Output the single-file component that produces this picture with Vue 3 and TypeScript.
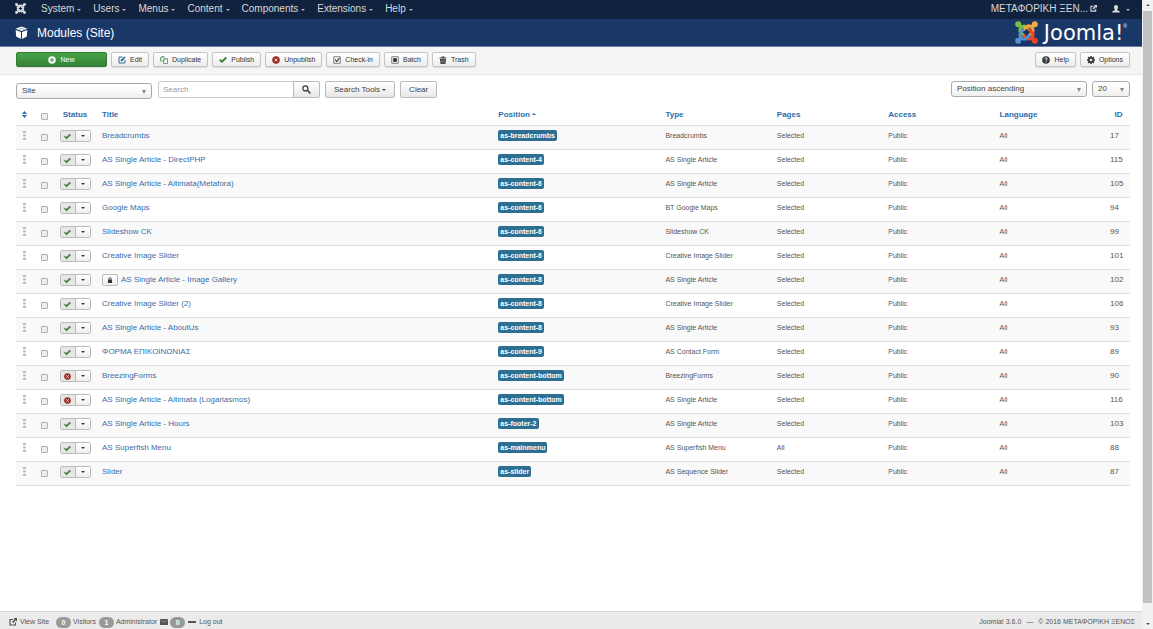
<script setup lang="ts">
import { ref } from 'vue'

interface ModuleRow {
  id: number
  title: string
  position: string
  type: string
  pages: string
  published: boolean
  locked?: boolean
}

const menus: string[] = ['System', 'Users', 'Menus', 'Content', 'Components', 'Extensions', 'Help']

const actions: { label: string; icon: string }[] = [
  { label: 'Edit', icon: 'edit' },
  { label: 'Duplicate', icon: 'copy' },
  { label: 'Publish', icon: 'check' },
  { label: 'Unpublish', icon: 'cross' },
  { label: 'Check-in', icon: 'tick' },
  { label: 'Batch', icon: 'batch' },
  { label: 'Trash', icon: 'trash' },
]

const plainHeads: string[] = ['Type', 'Pages', 'Access', 'Language']

const row = (id: number, title: string, position: string, type = 'AS Single Article', published = true): ModuleRow => ({
  id, title, position, type, pages: 'Selected', published,
})

const rows: ModuleRow[] = [
  row(17, 'Breadcrumbs', 'as-breadcrumbs', 'Breadcrumbs'),
  row(115, 'AS Single Article - DirectPHP', 'as-content-4'),
  row(105, 'AS Single Article - Aitimata(Metafora)', 'as-content-6'),
  row(94, 'Google Maps', 'as-content-6', 'BT Google Maps'),
  row(99, 'Slideshow CK', 'as-content-6', 'Slideshow CK'),
  row(101, 'Creative Image Slider', 'as-content-6', 'Creative Image Slider'),
  { ...row(102, 'AS Single Article - Image Gallery', 'as-content-8'), locked: true },
  row(106, 'Creative Image Slider (2)', 'as-content-8', 'Creative Image Slider'),
  row(93, 'AS Single Article - AboutUs', 'as-content-8'),
  row(89, 'ΦΟΡΜΑ ΕΠΙΚΟΙΝΩΝΙΑΣ', 'as-content-9', 'AS Contact Form'),
  row(90, 'BreezingForms', 'as-content-bottom', 'BreezingForms', false),
  row(116, 'AS Single Article - Aitimata (Logariasmos)', 'as-content-bottom', 'AS Single Article', false),
  row(103, 'AS Single Article - Hours', 'as-footer-2'),
  { ...row(88, 'AS Superfish Menu', 'as-mainmenu', 'AS Superfish Menu'), pages: 'All' },
  row(87, 'Slider', 'as-slider', 'AS Sequence Slider'),
]

const search = ref('')
</script>

<template>
  <div class="window">
    <svg class="defs" aria-hidden="true">
      <symbol id="arm" viewBox="0 0 32 32">
        <circle cx="4.500" cy="4.500" r="4.200" fill="currentColor" />
        <path d="M4.500 4.500 9 9" stroke="currentColor" stroke-width="5" />
        <path d="M13 21 8.500 16.500C6 14 6.200 11.500 8.500 8.800 11.500 6.200 14 6 16.500 8.500L20.500 12.500" fill="none" stroke="currentColor" stroke-width="4" />
      </symbol>
      <symbol id="i-edit" viewBox="0 0 16 16">
        <path d="M9 2H2v12h12V8" fill="none" stroke="#2d6f93" stroke-width="2" />
        <path d="M5 11l1-4 7-6 2 2-6 7z" fill="#2d6f93" />
      </symbol>
      <symbol id="i-copy" viewBox="0 0 16 16">
        <path d="M6 10H1V4l3-3h4v4M1 4h3V1M7 15V8l3-3h5v10zM7 8h3V5" fill="none" stroke="#4b8b57" stroke-width="1.5" />
      </symbol>
      <symbol id="i-check" viewBox="0 0 16 16">
        <path d="M1.5 7.5 6 11.500 14.5 3" fill="none" stroke="#378137" stroke-width="3.8" />
      </symbol>
      <symbol id="i-cross" viewBox="0 0 16 16">
        <circle cx="8" cy="8" r="7.5" fill="#9d261d" />
        <path d="M5 5l6 6M11 5l-6 6" stroke="#f3e2e0" stroke-width="2" />
      </symbol>
      <symbol id="i-tick" viewBox="0 0 16 16">
        <path d="M1.5 1.5h13v13h-13z" fill="none" stroke="#555" stroke-width="1.5" />
        <path d="M4 7l3.5 4L13 4" fill="none" stroke="#222" stroke-width="2.2" />
      </symbol>
      <symbol id="i-batch" viewBox="0 0 16 16">
        <path d="M1.5 1.5h13v13h-13z" fill="none" stroke="#555" stroke-width="1.5" />
        <path d="M4.5 4.5h7v7h-7z" fill="#222" />
      </symbol>
      <symbol id="i-trash" viewBox="0 0 16 16">
        <path d="M1 3h4V1h6v2h4v2H1zM2 6h12l-1 10H3z" fill="#444" />
        <path d="M6 8v6M10 8v6" stroke="#aaa" stroke-width="1.2" />
      </symbol>
      <symbol id="i-external" viewBox="0 0 16 16">
        <path d="M8 3H2v11h11V9" fill="none" stroke="currentColor" stroke-width="2.400" />
        <path d="M9 0h7v7l-2.500-2.500L8.500 10 6 7.500 11.500 2.500z" fill="currentColor" />
      </symbol>
    </svg>

    <div class="page">
      <nav class="topbar">
        <a href="#" class="brand" aria-label="Control panel">
          <svg viewBox="0 0 32 32">
            <use href="#arm" />
            <use href="#arm" transform="rotate(90 16 16)" />
            <use href="#arm" transform="rotate(180 16 16)" />
            <use href="#arm" transform="rotate(270 16 16)" />
          </svg>
        </a>
        <button v-for="m in menus" :key="m" type="button" class="menu">{{ m }}<i class="caret" /></button>
        <a href="#" class="site">ΜΕΤΑΦΟΡΙΚΗ ΞΕΝ...<svg><use href="#i-external" /></svg></a>
        <button type="button" class="menu user" aria-label="User menu">
          <svg viewBox="0 0 16 16"><path d="M8 0c3 0 4 2 4 4.500S10.500 9 10 9.500c0 1.500 6 2 6 5.500H0c0-3.500 6-4 6-5.500C5.500 9 4 7 4 4.500S5 0 8 0z" fill="#d9d9d9" /></svg>
          <i class="caret" />
        </button>
      </nav>

      <header class="titlebar">
        <svg class="cube" viewBox="0 0 16 16">
          <path d="M8 .5 15.200 3.500 8 6.300.8 3.500z" fill="#fff" />
          <path d="M.8 4.800 7.300 7.300V16L1.500 13zM15.200 4.800 8.700 7.300V16L14.500 13z" fill="#fff" />
          <path d="M4.500 4.500 8 3l3.500 1.500" fill="none" stroke="#1a3867" stroke-width=".6" />
        </svg>
        <h1>Modules (Site)</h1>
        <div class="logo">
          <svg viewBox="0 0 32 32">
            <use href="#arm" color="#7ac143" />
            <use href="#arm" color="#f9a541" transform="rotate(90 16 16)" />
            <use href="#arm" color="#f44321" transform="rotate(180 16 16)" />
            <use href="#arm" color="#5091cd" transform="rotate(270 16 16)" />
          </svg>
          <span>Joomla!</span><sup>®</sup>
        </div>
      </header>

      <div class="toolbar">
        <button type="button" class="btn new">
          <svg viewBox="0 0 16 16"><circle cx="8" cy="8" r="7.500" fill="#fff" /><path d="M8 4v8M4 8h8" stroke="#3c903c" stroke-width="2" /></svg>New
        </button>
        <button v-for="a in actions" :key="a.label" type="button" class="btn">
          <svg><use :href="'#i-' + a.icon" /></svg>{{ a.label }}
        </button>
        <span class="spacer" />
        <button type="button" class="btn">
          <svg viewBox="0 0 16 16"><circle cx="8" cy="8" r="7.500" fill="#333" /><path d="M5.500 6.200C5.500 3 10.500 3 10.500 6 10.500 7.800 8 7.800 8 9.800M8 11v2" fill="none" stroke="#fff" stroke-width="1.800" /></svg>Help
        </button>
        <button type="button" class="btn">
          <svg viewBox="0 0 16 16"><circle cx="8" cy="8" r="4.300" fill="none" stroke="#333" stroke-width="3.400" /><path d="M8 0v3M8 13v3M0 8h3M13 8h3M2.300 2.300l2 2M11.700 11.700l2 2M2.300 13.700l2-2M11.700 4.300l2-2" stroke="#333" stroke-width="3" /></svg>Options
        </button>
      </div>

      <main>
        <div class="filters">
          <div class="select wide low">
            <select aria-label="Client"><option>Site</option></select>
          </div>
          <div class="search">
            <input v-model="search" type="text" placeholder="Search" aria-label="Search" />
            <button type="button" class="tool" aria-label="Submit search">
              <svg viewBox="0 0 16 16"><circle cx="6" cy="6" r="4.500" fill="none" stroke="#333" stroke-width="2" /><path d="M9.500 9.500 15 15" stroke="#333" stroke-width="2.600" /></svg>
            </button>
          </div>
          <button type="button" class="tool">Search Tools<i class="caret" /></button>
          <button type="button" class="tool">Clear</button>
          <span class="spacer" />
          <div class="select wide">
            <select aria-label="Order"><option>Position ascending</option></select>
          </div>
          <div class="select narrow">
            <select aria-label="Limit"><option>20</option></select>
          </div>
        </div>

        <table>
          <colgroup>
            <col class="c-grip" /><col class="c-box" /><col class="c-status" /><col />
            <col class="c-pos" /><col class="c-tenth" /><col class="c-tenth" /><col class="c-tenth" /><col class="c-tenth" />
            <col class="c-id" />
          </colgroup>
          <thead>
            <tr>
              <th class="center">
                <a href="#" aria-label="Ordering"><svg class="sort" viewBox="0 0 10 14"><path d="M5 0l5 6H0zM5 14l5-6H0z" fill="#2a69b8" /></svg></a>
              </th>
              <th class="center"><input type="checkbox" aria-label="Select all" /></th>
              <th class="center"><a href="#">Status</a></th>
              <th><a href="#">Title</a></th>
              <th><a href="#">Position<i class="caret up" /></a></th>
              <th v-for="h in plainHeads" :key="h"><a href="#">{{ h }}</a></th>
              <th class="center"><a href="#">ID</a></th>
            </tr>
          </thead>
          <tbody>
            <tr v-for="r in rows" :key="r.id">
              <td class="center">
                <svg class="grip" viewBox="0 0 3 9"><path d="M0 0h3v2H0zM0 3.500h3v2H0zM0 7h3v2H0z" fill="#bbb" /></svg>
              </td>
              <td class="center"><input type="checkbox" :aria-label="'Select ' + r.title" /></td>
              <td class="center">
                <div class="state">
                  <button type="button" class="on" :aria-label="r.published ? 'Published' : 'Unpublished'">
                    <svg><use :href="r.published ? '#i-check' : '#i-cross'" /></svg>
                  </button>
                  <button type="button" aria-label="More actions"><i class="caret" /></button>
                </div>
              </td>
              <td class="title">
                <button v-if="r.locked" type="button" class="lock" aria-label="Checked out">
                  <svg viewBox="0 0 16 16"><path d="M2.500 7h11v9h-11z" fill="#333" /><path d="M5 8V4.500c0-4 6-4 6 0V8" fill="none" stroke="#333" stroke-width="2.200" /></svg>
                </button>
                <a href="#">{{ r.title }}</a>
              </td>
              <td><span class="label">{{ r.position }}</span></td>
              <td class="small">{{ r.type }}</td>
              <td class="small">{{ r.pages }}</td>
              <td class="small">Public</td>
              <td class="small">All</td>
              <td class="id">{{ r.id }}</td>
            </tr>
          </tbody>
        </table>
      </main>

      <footer>
        <a href="#"><svg><use href="#i-external" /></svg>View Site</a>
        <span class="stat"><b>0</b>Visitors</span>
        <span class="stat"><b>1</b>Administrator</span>
        <span class="stat mail">
          <svg viewBox="0 0 16 12"><path d="M0 0h16v12H0z" fill="#555" /><path d="M1 2l7 5 7-5" fill="none" stroke="#bbb" /></svg><b>0</b>
        </span>
        <a href="#" class="logout"><i />Log out</a>
        <span class="spacer" />
        <span class="version">
          <span>Joomla! 3.6.0</span><span>—</span><span>© 2016 ΜΕΤΑΦΟΡΙΚΗ ΞΕΝΟΣ</span>
        </span>
      </footer>
    </div>

    <div class="scrollbar" aria-hidden="true">
      <i class="caret up" />
      <span class="thumb" />
      <i class="caret" />
    </div>
  </div>
</template>

<style>
body {
  margin: 0;
}
</style>

<style scoped>
* {
  box-sizing: border-box;
}
.window {
  display: grid;
  grid-template-columns: minmax(0, 1fr) 11px;
  min-height: 100vh;
  background: #fff;
  color: #555;
  font-family: "Liberation Sans", Arial, sans-serif;
  font-size: 8px;
  line-height: 12px;
}
.defs {
  position: absolute;
  width: 0;
  height: 0;
}
svg {
  display: block;
  flex: none;
}
button,
input,
select {
  margin: 0;
  font: inherit;
  color: inherit;
}
a {
  color: inherit;
  text-decoration: none;
}
.spacer {
  flex: 1;
}
.caret {
  display: inline-block;
  border: 2px solid transparent;
  border-top-color: currentColor;
  border-bottom: 0;
}
.caret.up {
  border-top: 0;
  border-bottom: 2px solid currentColor;
}
.page {
  display: flex;
  flex-direction: column;
}

.topbar {
  display: flex;
  align-items: center;
  height: 19px;
  padding: 0 12px 2px 15px;
  background: #10223e;
  color: #d9d9d9;
  font-size: 10px;
}
.brand {
  margin-right: 15px;
}
.brand svg {
  width: 11px;
  height: 11px;
}
.menu {
  display: flex;
  align-items: center;
  gap: 3px;
  margin-right: 12px;
  padding: 0;
  border: 0;
  background: none;
}
.menu .caret {
  margin-top: 3px;
  opacity: 0.8;
}
.site {
  display: flex;
  align-items: center;
  gap: 2px;
  margin-left: auto;
}
.site svg {
  width: 7px;
  height: 7px;
}
.user {
  gap: 6px;
  margin: 0 0 0 15px;
}
.user svg {
  width: 8px;
  height: 8px;
}

.titlebar {
  display: flex;
  align-items: center;
  height: 28px;
  padding: 0 15px;
  border-bottom: 1px solid #6b7aa8;
  background: #1a3867;
  color: #fff;
}
.cube {
  width: 13px;
  height: 13px;
}
h1 {
  margin: 0 0 0 9px;
  font-size: 12px;
  font-weight: 400;
  line-height: 18px;
}
.logo {
  display: flex;
  align-items: center;
  margin-left: auto;
}
.logo svg {
  width: 23px;
  height: 23px;
  margin-right: 6px;
}
.logo span {
  font-family: "DejaVu Sans", sans-serif;
  font-size: 21px;
  line-height: 26px;
}
.logo sup {
  align-self: flex-start;
  font-size: 5px;
}

.toolbar {
  display: flex;
  gap: 4px;
  height: 28px;
  padding: 5px 12px 7px 16px;
  border-bottom: 1px solid #e6e6e6;
  background: #f5f5f5;
}
.btn {
  display: flex;
  align-items: center;
  justify-content: center;
  gap: 4px;
  padding: 0 6px;
  border: 1px solid #c4c4c4;
  border-radius: 2px;
  background: linear-gradient(#fff, #ededed);
  box-shadow: 0 1px 1px #ddd;
  color: #333;
  font-size: 7px;
}
.btn svg {
  width: 8px;
  height: 8px;
}
.btn.new {
  width: 91px;
  border-color: #327a32;
  background: linear-gradient(#46a546, #378137);
  color: #fff;
}

main {
  flex: 1;
  padding: 6px 12px 12px 16px;
}
.filters {
  display: flex;
  align-items: flex-start;
  gap: 5px;
  height: 24px;
}
.select {
  position: relative;
}
.select.wide {
  width: 136px;
}
.select.narrow {
  width: 38px;
}
.select.low {
  margin: 2px 1px 0 0;
}
.select select {
  display: block;
  width: 100%;
  height: 16px;
  padding: 0 14px 0 5px;
  border: 1px solid #aaa;
  border-radius: 3px;
  appearance: none;
  background: linear-gradient(#fff 20%, #eee);
  color: #444;
}
.select::after {
  content: "";
  position: absolute;
  top: 7px;
  right: 6px;
  border: 2px solid transparent;
  border-top: 4px solid #888;
  border-bottom: 0;
  pointer-events: none;
}
.search {
  display: flex;
}
.search input {
  width: 136px;
  height: 17px;
  padding: 0 4px;
  border: 1px solid #ccc;
  border-radius: 2px 0 0 2px;
}
.search input::placeholder {
  color: #999;
}
.tool {
  display: flex;
  align-items: center;
  gap: 2px;
  height: 17px;
  padding: 0 8px;
  border: 1px solid #bbb;
  border-radius: 2px;
  background: linear-gradient(#fff, #e8e8e8);
  color: #444;
}
.search .tool {
  margin-left: -1px;
  border-radius: 0 2px 2px 0;
}
.tool svg {
  width: 9px;
  height: 9px;
}

table {
  width: 100%;
  border-collapse: collapse;
  table-layout: fixed;
}
.c-grip {
  width: 17px;
}
.c-box {
  width: 23px;
}
.c-status {
  width: 38px;
}
.c-pos {
  width: 15%;
}
.c-tenth {
  width: 10%;
}
.c-id {
  width: 23px;
}
th,
td {
  height: 24px;
  padding: 4px 0 6px 4px;
  text-align: left;
  vertical-align: middle;
  white-space: nowrap;
}
th {
  height: 20px;
  padding: 3px 0 3px 4px;
  color: #2f6cae;
}
th .caret {
  margin: 0 0 2px 2px;
}
td {
  border-top: 1px solid #ddd;
}
tbody {
  border-bottom: 1px solid #ddd;
}
tbody tr:nth-child(odd) {
  background: #f9f9f9;
}
.center {
  padding-right: 0;
  padding-left: 0;
  text-align: center;
}
.center svg {
  margin: 0 auto;
}
.sort {
  width: 5px;
  height: 7px;
}
.grip {
  width: 3px;
  height: 9px;
}
td .grip {
  margin-bottom: 2px;
}
input[type="checkbox"] {
  display: block;
  width: 7px;
  height: 7px;
  margin: 3px auto 0;
  border: 1px solid #b0b0b0;
  border-radius: 1px;
  appearance: none;
  background: #eee;
}
.state {
  display: flex;
  width: 31px;
  height: 12px;
  margin: 0 auto;
  border: 1px solid #bbb;
  border-radius: 2px;
}
.state button {
  display: flex;
  flex: 1;
  align-items: center;
  justify-content: center;
  padding: 0;
  border: 0;
  background: linear-gradient(#fff, #eee);
  color: #333;
}
.state .on {
  border-right: 1px solid #bbb;
  background: #e6e6e6;
}
.state svg {
  width: 7px;
  height: 7px;
}
.title {
  padding-left: 8px;
  color: #3b6ca8;
}
th:nth-child(4) {
  padding-left: 8px;
}
.id {
  padding-left: 3px;
}
.lock {
  display: inline-flex;
  align-items: center;
  justify-content: center;
  width: 16px;
  height: 12px;
  margin-right: 3px;
  padding: 0;
  border: 1px solid #bbb;
  border-radius: 2px;
  background: linear-gradient(#fff, #eee);
  vertical-align: middle;
}
.lock svg {
  width: 6px;
  height: 6px;
}
.label {
  display: inline-block;
  padding: 0 2px;
  border-radius: 2px;
  background: #2d6f93;
  color: #fff;
  font-size: 7px;
  font-weight: 700;
  line-height: 11px;
  vertical-align: middle;
}
.small {
  font-size: 7px;
}

footer {
  display: flex;
  align-items: center;
  height: 18px;
  padding: 3px 7px 0 9px;
  border-top: 1px solid #d4d4d4;
  background: #ebebeb;
  font-size: 7px;
}
footer a,
.stat {
  display: flex;
  align-items: center;
  gap: 3px;
}
footer a svg {
  width: 8px;
  height: 8px;
}
footer b {
  width: 15px;
  border-radius: 6px;
  background: #999;
  color: #fff;
  line-height: 11px;
  text-align: center;
}
.stat {
  gap: 2px;
  margin-left: 3px;
}
footer a + .stat {
  margin-left: 7px;
}
.stat svg {
  width: 8px;
  height: 6px;
}
.logout {
  margin-left: 3px;
}
.logout i {
  width: 8px;
  height: 2px;
  background: #555;
}
.version {
  display: flex;
  gap: 5px;
}

.scrollbar {
  display: flex;
  flex-direction: column;
  align-items: center;
  justify-content: space-between;
  padding: 4px 1px;
  background: #f1f1f1;
  color: #555;
}
.thumb {
  flex: 1;
  width: 9px;
  margin: 5px 0 20px;
  background: #c1c1c1;
}
</style>
